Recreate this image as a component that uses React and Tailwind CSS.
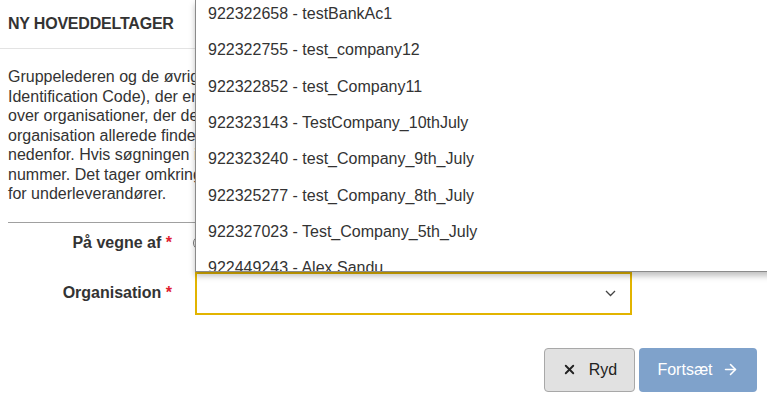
import { X, ArrowRight } from 'lucide-react'

const items = [
  '922322658 - testBankAc1',
  '922322755 - test_company12',
  '922322852 - test_Company11',
  '922323143 - TestCompany_10thJuly',
  '922323240 - test_Company_9th_July',
  '922325277 - test_Company_8th_July',
  '922327023 - Test_Company_5th_July',
  '922449243 - Alex Sandu',
]

const lines = [
  'Gruppelederen og de øvrige deltagere identificeres ved deres CVR-nummer eller LEI (Legal Entity',
  'Identification Code), der er registreret i systemet. Søg i feltet nedenfor for at finde en liste',
  'over organisationer, der der allerede er oprettet i systemet. Kontroller om din',
  'organisation allerede findes, før du opretter en ny, ved at søge i feltet',
  'nedenfor. Hvis søgningen ikke giver et resultat, kan du oprette en ny med dit CVR-',
  'nummer. Det tager omkring et døgn, før organisationen kan vælges som deltager eller',
  'for underleverandører.',
]

export default function App() {
  return (
    <div className="relative w-[767px] h-[396px] overflow-hidden bg-white text-[#333] font-['Liberation_Sans',Arial,sans-serif]">
      <div className="h-[49px] flex items-center pl-2 border-b border-[#e3e3e3]">
        <h2 className="text-[16px] font-bold tracking-[-0.2px]">NY HOVEDDELTAGER</h2>
      </div>

      <div className="px-2">
        <p className="pt-[18px] pb-[18px] text-[16px] leading-[19.5px] border-b border-[#a0a0a0]">
          {lines.map((l) => (
            <span key={l} className="block whitespace-nowrap">{l}</span>
          ))}
        </p>

        <div className="flex items-center h-[40px]">
          <div className="w-[164px] text-right text-[16px] font-bold">
            På vegne af <span className="text-[#e0202f]">*</span>
          </div>
          <span className="ml-[21px] w-[14px] h-[14px] rounded-full border border-[#777]" />
        </div>

        <div className="flex items-center mt-[9px]">
          <div className="w-[164px] text-right text-[16px] font-bold">
            Organisation <span className="text-[#e0202f]">*</span>
          </div>
          <div className="ml-[23px] w-[437px] h-[43px] border-2 border-[#e2b400] flex items-center justify-end pr-[14px]">
            <svg width="11" height="7" viewBox="0 0 11 7" fill="none" stroke="#444" strokeWidth="1.3">
              <polyline points="1,1 5.5,5.5 10,1" />
            </svg>
          </div>
        </div>

        <div className="flex justify-end gap-[4px] mt-[33px] pr-[2px]">
          <button className="w-[91px] h-[44px] rounded-[4px] border border-[#a8a8a8] bg-[#e1e1e1] flex items-center justify-center gap-[12px] text-[16px] text-[#222]">
            <X size={15} strokeWidth={3} />
            <span>Ryd</span>
          </button>
          <button className="w-[118px] h-[44px] rounded-[4px] bg-[#7fa2cb] flex items-center justify-center gap-[9px] text-[16px] text-white">
            <span>Fortsæt</span>
            <ArrowRight size={17} strokeWidth={2.2} />
          </button>
        </div>
      </div>

      <div className="absolute left-[195px] top-0 w-[620px] h-[272px] overflow-hidden bg-white border-l border-b border-[#8a8a8a] shadow-[0_4px_6px_rgba(0,0,0,0.25)]">
        <ul className="mt-[-4px]">
          {items.map((t) => (
            <li key={t} className="h-[36.3px] flex items-center pl-[12px] text-[16px] text-[#333] whitespace-nowrap">
              {t}
            </li>
          ))}
        </ul>
      </div>
    </div>
  )
}
